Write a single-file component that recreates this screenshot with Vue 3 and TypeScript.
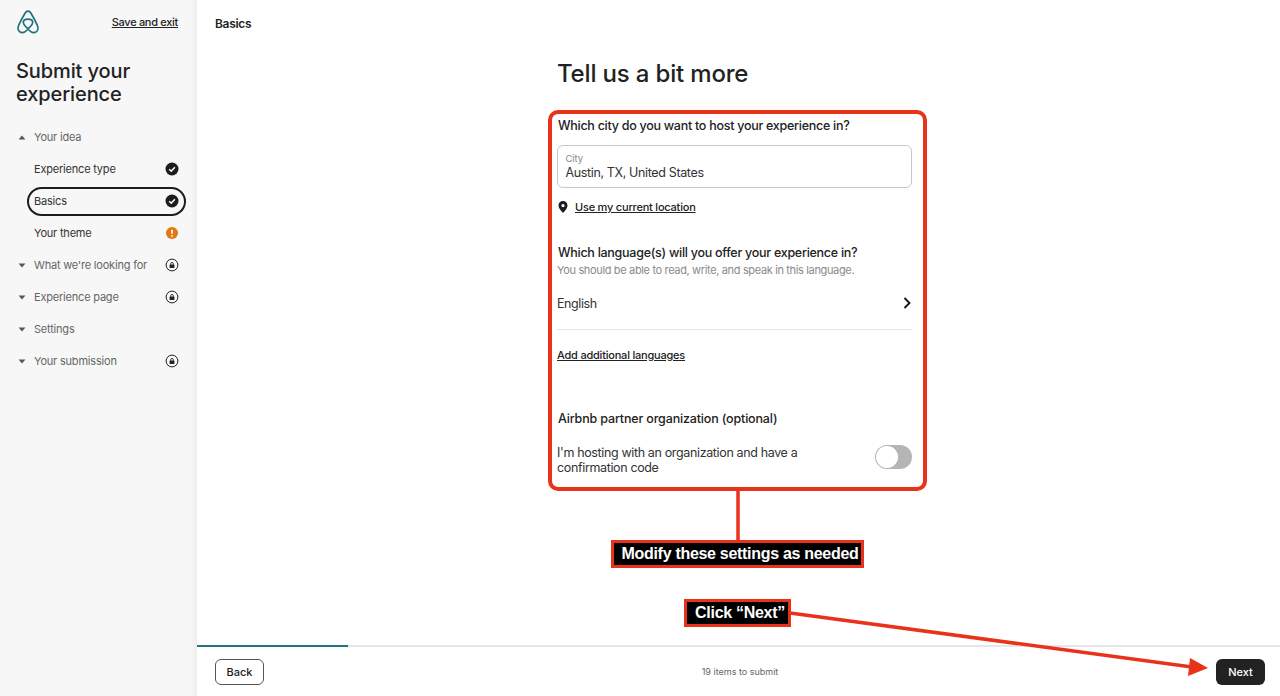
<template>
  <div class="page">
    <!-- 左侧导航 -->
    <aside class="sidebar">
      <div class="side-top">
        <svg class="logo" width="22" height="24" viewBox="0 0 22 24" fill="none" stroke="#22727c" stroke-width="1.7" stroke-linejoin="round">
          <path d="M11 19C8.4 16.2 6.3 14.4 6.3 12.4C6.3 10.2 8.6 9.1 11 9.1C13.4 9.1 15.7 10.2 15.7 12.4C15.7 14.4 13.6 16.2 11 19C9 21.2 7.5 22.6 5.6 22.6C3 22.6 1 20.6 1 18.2C1 17 1.4 15.9 2 14.6C3.6 11 6 6.6 8 3.2C9 1.6 9.8 1.1 11 1.1C12.2 1.1 13 1.6 14 3.2C16 6.6 18.4 11 20 14.6C20.6 15.9 21 17 21 18.2C21 20.6 19 22.6 16.4 22.6C14.5 22.6 13 21.2 11 19Z" />
        </svg>
        <a class="save-link">Save and exit</a>
      </div>
      <h1 class="side-title">Submit your experience</h1>
      <ul class="steps">
        <li v-for="step in steps" :key="step.label" class="step" :class="{ sub: step.sub, active: step.active }">
          <svg v-if="!step.sub" class="caret" width="8" height="5" viewBox="0 0 8 5" fill="#555">
            <path :d="step.open ? 'M4 .6 7.4 4.4H.6Z' : 'M4 4.4 .6 .6H7.4Z'" />
          </svg>
          <span class="step-label">{{ step.label }}</span>
          <svg v-if="step.icon === 'check'" class="status" width="14" height="14" viewBox="0 0 14 14">
            <circle cx="7" cy="7" r="6.5" fill="#1c1c1c" />
            <path d="M4.2 7.2 6.2 9.1 9.9 5.2" fill="none" stroke="#fff" stroke-width="1.5" />
          </svg>
          <svg v-else-if="step.icon === 'warn'" class="status" width="14" height="14" viewBox="0 0 14 14">
            <circle cx="7" cy="7" r="6" fill="#e07912" />
            <rect x="6.2" y="3.4" width="1.6" height="4.6" rx=".8" fill="#fff" />
            <circle cx="7" cy="9.9" r=".9" fill="#fff" />
          </svg>
          <svg v-else-if="step.icon === 'lock'" class="status" width="14" height="14" viewBox="0 0 14 14">
            <circle cx="7" cy="7" r="5.9" fill="none" stroke="#222" stroke-width="1" />
            <rect x="4.6" y="6.6" width="4.8" height="3.4" rx=".6" fill="#222" />
            <path d="M5.6 6.8V5.8C5.6 4 8.4 4 8.4 5.8V6.8" fill="none" stroke="#222" stroke-width=".9" />
          </svg>
        </li>
      </ul>
    </aside>

    <!-- 主内容 -->
    <main class="main">
      <header class="main-head">Basics</header>
      <section class="content">
        <h2 class="title">Tell us a bit more</h2>
        <h3 class="question first">Which city do you want to host your experience in?</h3>
        <div class="field">
          <span class="field-label">City</span>
          <span class="field-value">Austin, TX, United States</span>
        </div>
        <div class="location">
          <svg width="10" height="12" viewBox="0 0 10 12" fill="#1c1c1c">
            <path fill-rule="evenodd" d="M5 0C2.3 0 .5 2 .5 4.5C.5 7 3 10 5 12C7 10 9.5 7 9.5 4.5C9.5 2 7.7 0 5 0ZM5 3A1.6 1.6 0 1 1 5 6.2A1.6 1.6 0 0 1 5 3Z" />
          </svg>
          <a class="link">Use my current location</a>
        </div>
        <h3 class="question lang">Which language(s) will you offer your experience in?</h3>
        <p class="hint">You should be able to read, write, and speak in this language.</p>
        <div class="lang-row">
          <span>English</span>
          <svg width="8" height="12" viewBox="0 0 8 12" fill="none" stroke="#111" stroke-width="1.8">
            <path d="M1.5 1 6.5 6 1.5 11" />
          </svg>
        </div>
        <a class="link add-lang">Add additional languages</a>
        <h3 class="question partner">Airbnb partner organization (optional)</h3>
        <div class="partner-row">
          <span class="partner-text">I'm hosting with an organization and have a confirmation code</span>
          <span class="toggle"><span class="knob"></span></span>
        </div>
      </section>
      <footer class="footer">
        <div class="progress"><div class="progress-fill" :style="{ width: progress + 'px' }"></div></div>
        <div class="footer-row">
          <button class="btn back">Back</button>
          <span class="items">19 items to submit</span>
          <button class="btn next">Next</button>
        </div>
      </footer>
    </main>

    <!-- 标注层 -->
    <div class="callout-box"></div>
    <svg class="callout-lines" width="1280" height="696" viewBox="0 0 1280 696">
      <path d="M738 490V541" stroke="#e8321a" stroke-width="3.5" fill="none" />
      <path d="M790 613 1192 667" stroke="#e8321a" stroke-width="3.5" fill="none" />
      <path d="M1208 668 1190 658 1188 676Z" fill="#e8321a" />
    </svg>
    <div class="tag tag-modify">Modify these settings as needed</div>
    <div class="tag tag-next">Click “Next”</div>
  </div>
</template>

<script setup lang="ts">
interface Step {
  label: string
  sub?: boolean
  open?: boolean
  active?: boolean
  icon?: 'check' | 'warn' | 'lock'
}

const progress = 151

const steps: Step[] = [
  { label: 'Your idea', open: true },
  { label: 'Experience type', sub: true, icon: 'check' },
  { label: 'Basics', sub: true, active: true, icon: 'check' },
  { label: 'Your theme', sub: true, icon: 'warn' },
  { label: "What we're looking for", icon: 'lock' },
  { label: 'Experience page', icon: 'lock' },
  { label: 'Settings' },
  { label: 'Your submission', icon: 'lock' }
]
</script>

<style>
html,
body {
  margin: 0;
  background: #fff;
}
</style>

<style scoped>
.page {
  position: relative;
  display: flex;
  width: 1280px;
  height: 696px;
  overflow: hidden;
  font-family: Inter, "Liberation Sans", sans-serif;
  color: #222;
}

.sidebar {
  width: 197px;
  flex: none;
  box-sizing: border-box;
  padding: 10px 0 0 16px;
  background: linear-gradient(to right, #f7f7f7 191px, #eeeeee 197px);
}

.side-top {
  display: flex;
  justify-content: space-between;
  align-items: flex-start;
  padding-right: 19px;
}

.logo {
  margin-left: 1px;
}

.save-link {
  margin-top: 6px;
  font-size: 11px;
  font-weight: 500;
  letter-spacing: -0.3px;
  line-height: 13px;
  text-decoration: underline;
}

.side-title {
  margin: 26px 0 0;
  width: 150px;
  font-size: 20px;
  font-weight: 500;
  letter-spacing: -0.1px;
  line-height: 23px;
}

.steps {
  list-style: none;
  margin: 15px 0 0;
  padding: 0;
}

.step {
  display: flex;
  align-items: center;
  height: 32px;
  padding-right: 18px;
  font-size: 11px;
  letter-spacing: -0.2px;
  color: #666;
}

.caret {
  width: 8px;
  margin-left: 2px;
  margin-right: 8px;
}

.step.sub {
  padding-left: 18px;
  color: #333;
}

.step-label {
  flex: 1;
}

.step.active {
  position: relative;
}

.step.active::before {
  content: "";
  position: absolute;
  left: 11px;
  right: 11px;
  top: 2px;
  bottom: 1px;
  border: 2px solid #1c1c1c;
  border-radius: 15px;
}

.status {
  flex: none;
}

.main {
  flex: 1;
  display: flex;
  flex-direction: column;
  min-width: 0;
}

.main-head {
  height: 48px;
  padding-left: 18px;
  font-size: 12px;
  font-weight: 600;
  letter-spacing: -0.3px;
  line-height: 48px;
}

.content {
  flex: 1;
  margin-left: 360px;
  width: 355px;
}

.title {
  margin: 10px 0 0;
  font-size: 24px;
  font-weight: 500;
  letter-spacing: -0.17px;
  line-height: 32px;
}

.question {
  margin: 0 0 0 1px;
  font-size: 12.5px;
  font-weight: 500;
  letter-spacing: -0.27px;
  line-height: 16px;
  color: #222;
}

.question.first {
  margin-top: 28px;
}

.field {
  display: flex;
  flex-direction: column;
  box-sizing: border-box;
  height: 43px;
  margin-top: 11px;
  padding: 6.5px 7.5px 0;
  border: 1.5px solid #c8c8c8;
  border-radius: 6px;
}

.field-label {
  font-size: 9.5px;
  letter-spacing: -0.1px;
  line-height: 12px;
  color: #888;
}

.field-value {
  font-size: 12.5px;
  letter-spacing: -0.36px;
  line-height: 16px;
  color: #333;
}

.location {
  display: flex;
  align-items: center;
  gap: 7px;
  height: 14px;
  margin-top: 12px;
  padding-left: 1px;
}

.link {
  font-size: 11px;
  font-weight: 500;
  letter-spacing: -0.21px;
  line-height: 14px;
  text-decoration: underline;
  color: #222;
}

.question.lang {
  margin-top: 31px;
}

.hint {
  margin: 2px 0 0;
  font-size: 11px;
  letter-spacing: -0.35px;
  line-height: 14px;
  color: #8a8a8a;
}

.lang-row {
  display: flex;
  justify-content: space-between;
  align-items: center;
  height: 52px;
  padding-right: 1px;
  border-bottom: 1px solid #e6e6e6;
  font-size: 12.5px;
  letter-spacing: -0.4px;
  color: #333;
}

.add-lang {
  display: block;
  margin-top: 18px;
}

.question.partner {
  margin-top: 49px;
  letter-spacing: -0.16px;
}

.partner-row {
  display: flex;
  justify-content: space-between;
  align-items: flex-start;
  margin-top: 18px;
}

.partner-text {
  width: 262px;
  font-size: 12.5px;
  letter-spacing: -0.36px;
  line-height: 15px;
  color: #333;
}

.toggle {
  display: flex;
  align-items: center;
  box-sizing: border-box;
  width: 37px;
  height: 24px;
  padding: 1px;
  border-radius: 12px;
  background: #b5b5b5;
}

.knob {
  width: 22px;
  height: 22px;
  border-radius: 50%;
  background: #fff;
}

.footer {
  flex: none;
}

.progress {
  height: 2px;
  background: #e6e6e6;
}

.progress-fill {
  height: 2px;
  background: #1f7480;
}

.footer-row {
  display: flex;
  justify-content: space-between;
  align-items: center;
  height: 49px;
  padding: 0 15px 0 18px;
}

.btn {
  box-sizing: border-box;
  width: 49px;
  height: 26px;
  padding: 0;
  border-radius: 6px;
  font-family: inherit;
  font-size: 11px;
  font-weight: 500;
}

.back {
  border: 1px solid #555;
  background: #fff;
  color: #222;
}

.next {
  border: 0;
  background: #222;
  color: #fff;
}

.items {
  font-size: 9px;
  color: #666;
}

.callout-box {
  position: absolute;
  left: 548px;
  top: 110px;
  width: 379px;
  height: 381px;
  box-sizing: border-box;
  border: 4px solid #e8321a;
  border-radius: 10px;
}

.callout-lines {
  position: absolute;
  left: 0;
  top: 0;
  pointer-events: none;
}

.tag {
  position: absolute;
  box-sizing: border-box;
  height: 28px;
  padding-left: 5px;
  border: 3px solid #e8321a;
  background: #000;
  color: #fff;
  font-family: "Liberation Sans", Arial, sans-serif;
  font-size: 16px;
  font-weight: 700;
  letter-spacing: -0.3px;
  line-height: 22px;
  text-align: center;
  white-space: nowrap;
}

.tag-modify {
  left: 611px;
  top: 540px;
  width: 253px;
}

.tag-next {
  left: 684px;
  top: 599px;
  width: 107px;
}
</style>
